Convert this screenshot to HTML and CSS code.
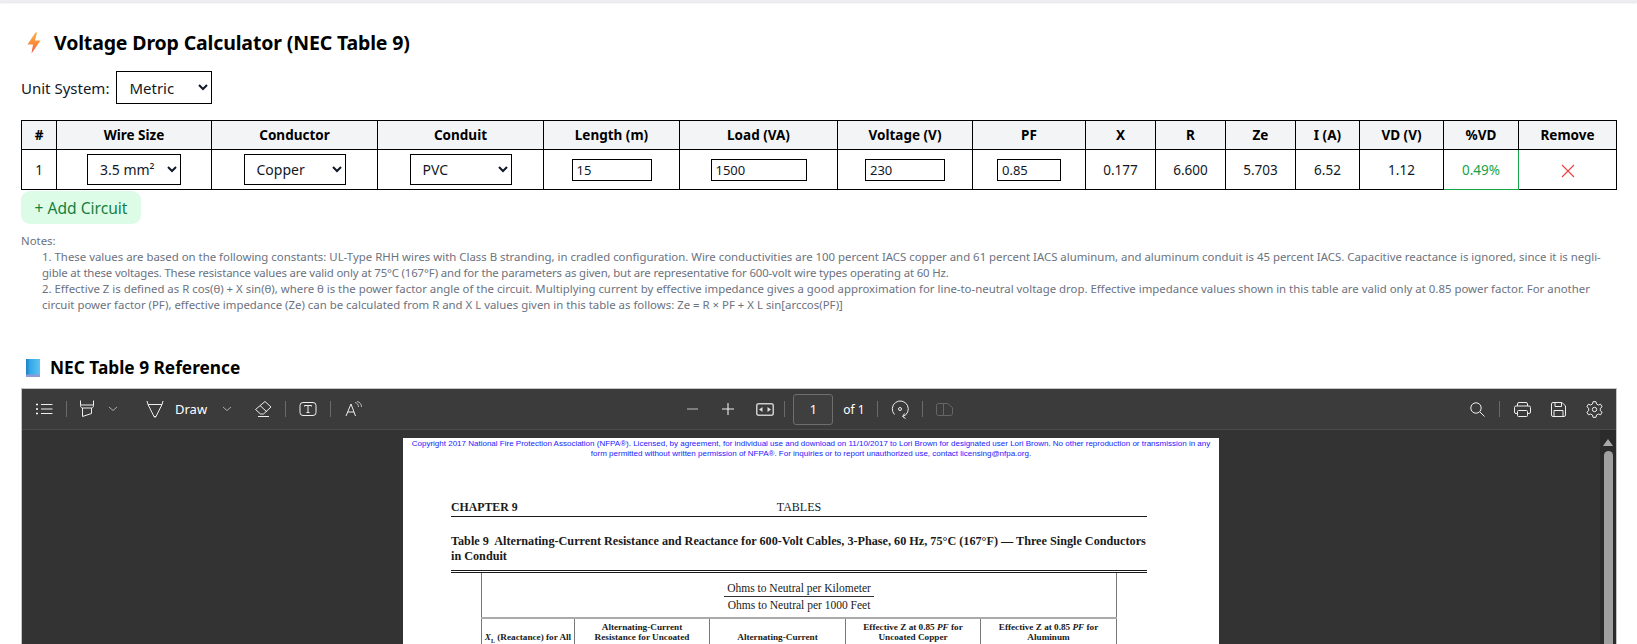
FILE: index.html
```html
<!DOCTYPE html>
<html lang="en">
<head>
  <meta charset="UTF-8">
  <title>Voltage Drop Calculator</title>
  <link rel="stylesheet" href="styles.css">
</head>
<body>
  <div class="topbar"></div>
  <main class="content">
    <!-- Calculator -->
    <h2 class="title">
      <svg class="title-icon" width="16" height="22" viewBox="0 0 16 22">
        <defs><linearGradient id="bolt" x1="0" y1="0" x2="0" y2="1"><stop offset="0" stop-color="#fbb040"/><stop offset="0.55" stop-color="#f98a3c"/><stop offset="1" stop-color="#ec5246"/></linearGradient></defs>
        <path d="M9.5 0.5 L1.5 12.5 H7 L5.5 21.5 L14.5 8.5 H9 L11 0.5 Z" fill="url(#bolt)"/>
      </svg>
      Voltage Drop Calculator (NEC Table 9)
    </h2>

    <div class="unit-row">
      <label for="unit">Unit System:</label>
      <select id="unit" class="unit-select"><option>Metric</option><option>Imperial</option></select>
    </div>

    <table class="circuits">
      <colgroup>
        <col><col><col><col><col><col><col><col><col><col><col><col><col><col><col>
      </colgroup>
      <thead>
        <tr>
          <th>#</th><th>Wire Size</th><th>Conductor</th><th>Conduit</th><th>Length (m)</th><th>Load (VA)</th><th>Voltage (V)</th><th>PF</th>
          <th>X</th><th>R</th><th>Ze</th><th>I (A)</th><th>VD (V)</th><th>%VD</th><th>Remove</th>
        </tr>
      </thead>
      <tbody>
        <tr>
          <td>1</td>
          <td><select class="sel-wire"><option>3.5 mm²</option></select></td>
          <td><select class="sel-wide"><option>Copper</option></select></td>
          <td><select class="sel-wide"><option>PVC</option></select></td>
          <td><input class="in-len" value="15"></td>
          <td><input class="in-load" value="1500"></td>
          <td><input class="in-len" value="230"></td>
          <td><input class="in-pf" value="0.85"></td>
          <td>0.177</td><td>6.600</td><td>5.703</td><td>6.52</td><td>1.12</td>
          <td class="vd-ok">0.49%</td>
          <td class="remove">
            <svg width="14" height="14" viewBox="0 0 14 14"><path d="M1 1 L13 13 M13 1 L1 13" stroke="#ef4444" stroke-width="1.2" fill="none"/></svg>
          </td>
        </tr>
      </tbody>
    </table>

    <button class="add-btn">+ Add Circuit</button>

    <div class="notes">
      <div>Notes:</div>
      <div class="note">1. These values are based on the following constants: UL-Type RHH wires with Class B stranding, in cradled configuration. Wire conductivities are 100 percent IACS copper and 61 percent IACS aluminum, and aluminum conduit is 45 percent IACS. Capacitive reactance is ignored, since it is negli-<br><span class="tight">gible at these voltages. These resistance values are valid only at 75°C (167°F) and for the parameters as given, but are representative for 600-volt wire types operating at 60 Hz.</span></div>
      <div class="note">2. Effective Z is defined as R cos(θ) + X sin(θ), where θ is the power factor angle of the circuit. Multiplying current by effective impedance gives a good approximation for line-to-neutral voltage drop. Effective impedance values shown in this table are valid only at 0.85 power factor. For another<br>circuit power factor (PF), effective impedance (Ze) can be calculated from R and X L values given in this table as follows: Ze = R × PF + X L sin[arccos(PF)]</div>
    </div>

    <!-- Reference PDF -->
    <h3 class="ref-title">
      <svg width="15" height="18" viewBox="0 0 15 18">
        <defs><linearGradient id="book" x1="0" y1="0" x2="1" y2="0"><stop offset="0" stop-color="#1b7fc4"/><stop offset="0.3" stop-color="#35a8e8"/><stop offset="1" stop-color="#5cc4f2"/></linearGradient></defs>
        <rect x="1" y="0" width="14" height="16" fill="url(#book)"/>
        <rect x="1" y="15.5" width="14" height="2.5" fill="#8f9bd6"/>
      </svg>
      NEC Table 9 Reference
    </h3>

    <div class="viewer">
      <div class="toolbar">
        <div class="tb-left">
          <span class="tb-btn w44"><svg width="18" height="14" viewBox="0 0 18 14"><path d="M6 2.5H17.5M6 7H17.5M6 11.5H17.5" stroke="#eee" fill="none"/><path d="M1 2.5H3M1 7H3M1 11.5H3" stroke="#fff" stroke-width="1.6" fill="none"/></svg></span>
          <span class="tb-sep"></span>
          <span class="tb-btn w40"><svg width="16" height="18" viewBox="0 0 16 18"><path d="M1.5 0.5V5.5C1.5 7 2 7.5 3.5 8V16.5L12.5 13.5V8C14 7.5 14.5 7 14.5 5.5V0.5M1.5 5H14.5M3.5 8H12.5" stroke="#eee" fill="none"/></svg></span>
          <span class="tb-chev"><svg width="10" height="6" viewBox="0 0 10 6"><path d="M1 1L5 4.5L9 1" stroke="#aaa" fill="none"/></svg></span>
          <span class="tb-btn w24 ml24"><svg width="18" height="18" viewBox="0 0 18 18"><path d="M1 1L2 4.5L8 16.5H10L16 4.5L17 1M2 4.5H16M8 16.5L9 17.5L10 16.5" stroke="#eee" fill="none"/></svg></span>
          <span class="tb-label">Draw</span>
          <span class="tb-chev ml14"><svg width="10" height="6" viewBox="0 0 10 6"><path d="M1 1L5 4.5L9 1" stroke="#aaa" fill="none"/></svg></span>
          <span class="tb-btn w44 ml8"><svg width="18" height="18" viewBox="0 0 18 18"><path d="M11 1.5L17 7L9.5 14H6.5L1.5 9.5ZM6 5.5L13 12M4 16.5H15" stroke="#eee" fill="none"/></svg></span>
          <span class="tb-sep"></span>
          <span class="tb-btn w44"><svg width="18" height="16" viewBox="0 0 18 16"><rect x="1" y="1.5" width="16" height="13" rx="3" stroke="#eee" fill="none"/><path d="M5.5 5.5V4.5H12.5V5.5M9 4.5V11.5M7.5 11.5H10.5" stroke="#eee" fill="none"/></svg></span>
          <span class="tb-sep"></span>
          <span class="tb-btn w44"><svg width="17" height="16" viewBox="0 0 17 16"><path d="M1 15L6 3L10.5 15M2.8 11H9" stroke="#eee" fill="none"/><path d="M10 1.5C12.5 2 13.5 4 13.5 6M12 0.5C15 1 16.5 3.5 16.5 6" stroke="#bbb" fill="none"/></svg></span>
        </div>

        <div class="tb-center">
          <span class="tb-btn w36"><svg width="11" height="2" viewBox="0 0 11 2"><path d="M0 1H11" stroke="#aaa" stroke-width="1.2"/></svg></span>
          <span class="tb-btn w36"><svg width="12" height="12" viewBox="0 0 12 12"><path d="M0 6H12M6 0V12" stroke="#eee" stroke-width="1.1"/></svg></span>
          <span class="tb-btn w38"><svg width="18" height="13" viewBox="0 0 18 13"><rect x="0.75" y="0.75" width="16.5" height="11.5" rx="2" stroke="#ccc" stroke-width="1.5" fill="none"/><path d="M3 6.5L6.5 4V9ZM15 6.5L11.5 4V9Z" fill="#ddd"/></svg></span>
          <span class="tb-sep"></span>
          <span class="page-box">1</span>
          <span class="page-of">of 1</span>
          <span class="tb-sep ml12"></span>
          <span class="tb-btn w44"><svg width="18" height="19" viewBox="0 0 18 19"><path d="M3.5 14.5A8 8 0 1 1 12 16.5" stroke="#eee" fill="none"/><path d="M13.5 13.5L11.5 16.5L14.5 18.5" stroke="#eee" fill="none"/><circle cx="9" cy="9" r="1.5" stroke="#eee" fill="none"/></svg></span>
          <span class="tb-sep"></span>
          <span class="tb-btn w44"><svg width="17" height="13" viewBox="0 0 17 13"><path d="M7.5 0.5H2.5A2 2 0 0 0 0.5 2.5V10.5A2 2 0 0 0 2.5 12.5H7.5ZM7.5 0.5H11.5L16.5 4.5V10.5A2 2 0 0 1 14.5 12.5H7.5" stroke="#666" fill="none"/></svg></span>
        </div>

        <div class="tb-right">
          <span class="tb-btn w44"><svg width="15" height="15" viewBox="0 0 15 15"><circle cx="6" cy="6" r="5.2" stroke="#eee" fill="none"/><path d="M9.8 9.8L14.5 14.5" stroke="#eee" fill="none"/></svg></span>
          <span class="tb-sep mr4"></span>
          <span class="tb-btn w36"><svg width="17" height="15" viewBox="0 0 17 15"><path d="M3.5 4V2A1.5 1.5 0 0 1 5 0.5H12A1.5 1.5 0 0 1 13.5 2V4M3.5 11.5H2A1.5 1.5 0 0 1 0.5 10V5.5A1.5 1.5 0 0 1 2 4H15A1.5 1.5 0 0 1 16.5 5.5V10A1.5 1.5 0 0 1 15 11.5H13.5" stroke="#eee" fill="none"/><rect x="3.5" y="8.5" width="10" height="6" rx="1" stroke="#eee" fill="none"/></svg></span>
          <span class="tb-btn w36"><svg width="15" height="15" viewBox="0 0 15 15"><path d="M2 0.5H11L14.5 4V13A1.5 1.5 0 0 1 13 14.5H2A1.5 1.5 0 0 1 0.5 13V2A1.5 1.5 0 0 1 2 0.5ZM4 0.5V4.5H10.5V0.5M3 14.5V8.5H12V14.5" stroke="#eee" fill="none"/></svg></span>
          <span class="tb-btn w36"><svg width="17" height="17" viewBox="0 0 17 17"><path d="M7 0.7H10L10.5 3L12.4 4L14.6 3.2L16.1 5.8L14.3 7.3V9.7L16.1 11.2L14.6 13.8L12.4 13L10.5 14L10 16.3H7L6.5 14L4.6 13L2.4 13.8L0.9 11.2L2.7 9.7V7.3L0.9 5.8L2.4 3.2L4.6 4L6.5 3Z" stroke="#eee" stroke-linejoin="round" fill="none"/><circle cx="8.5" cy="8.5" r="2.2" stroke="#eee" fill="none"/></svg></span>
        </div>
      </div>

      <div class="viewer-body">
        <div class="stage">
          <div class="pdf-page">
            <p class="copyright">Copyright 2017 National Fire Protection Association (NFPA®). Licensed, by agreement, for individual use and download on 11/10/2017 to Lori Brown for designated user Lori Brown. No other reproduction or transmission in any form permitted without written permission of NFPA®. For inquiries or to report unauthorized use, contact licensing@nfpa.org.</p>
            <div class="chapter"><b>CHAPTER 9</b><span class="chapter-name">TABLES</span></div>
            <div class="table-head">Table 9&nbsp; Alternating-Current Resistance and Reactance for 600-Volt Cables, 3-Phase, 60 Hz, 75°C (167°F) — Three Single Conductors in Conduit</div>
            <table class="nec">
              <colgroup><col><col><col><col><col></colgroup>
              <tr><td colspan="5" class="nec-units"><span class="km">Ohms to Neutral per Kilometer</span><span>Ohms to Neutral per 1000 Feet</span></td></tr>
              <tr class="nec-head">
                <th class="low"><i>X</i><sub>L</sub> (Reactance) for All<br>Wires</th>
                <th>Alternating-Current<br>Resistance for Uncoated<br>Copper Wires</th>
                <th class="low">Alternating-Current<br>Resistance for Aluminum Wires</th>
                <th>Effective Z at 0.85 <i>PF</i> for<br>Uncoated Copper<br>Wires</th>
                <th>Effective Z at 0.85 <i>PF</i> for<br>Aluminum<br>Wires</th>
              </tr>
            </table>
          </div>
        </div>
        <div class="scrollbar">
          <span class="scroll-up"></span>
          <span class="scroll-thumb"></span>
        </div>
      </div>
    </div>
  </main>
</body>
</html>
```
FILE: styles.css
```css
* {
  margin: 0;
  padding: 0;
  box-sizing: border-box;
}

html, body {
  height: 644px;
  overflow: hidden;
  background: #fff;
}

body {
  font-family: "Noto Sans", "Open Sans", sans-serif;
  color: #111827;
}

/* Shadow of the header above the page */
.topbar {
  height: 2px;
  background: #eceef1;
  box-shadow: 0 1px 2px rgba(0, 0, 0, 0.12);
}

.content {
  padding: 28px 20px 0 21px;
}

.title {
  display: flex;
  align-items: center;
  font-size: 19.5px;
  font-weight: 700;
  line-height: 26px;
  color: #000;
  letter-spacing: -0.15px;
}

.title-icon {
  margin: 0 12px 0 5px;
}

.unit-row {
  display: flex;
  align-items: center;
  gap: 7px;
  margin-top: 15px;
  font-size: 15px;
}

select, input {
  font-family: inherit;
  color: #111827;
  background: #fff;
  border: 1px solid #000;
  border-radius: 0;
  font-size: 14px;
  outline: none;
}

.unit-select {
  width: 96px;
  height: 33px;
  padding-left: 8px;
  font-size: 15px;
}

/* Circuit table */
.circuits {
  width: 1596px;
  margin-top: 16px;
  border-collapse: collapse;
  table-layout: fixed;
  font-size: 13.5px;
}

.circuits col:nth-child(1) { width: 35px; }
.circuits col:nth-child(2) { width: 155px; }
.circuits col:nth-child(3) { width: 166px; }
.circuits col:nth-child(4) { width: 166px; }
.circuits col:nth-child(5) { width: 136px; }
.circuits col:nth-child(6) { width: 158px; }
.circuits col:nth-child(7) { width: 135px; }
.circuits col:nth-child(8) { width: 113px; }
.circuits col:nth-child(9) { width: 70px; }
.circuits col:nth-child(10) { width: 70px; }
.circuits col:nth-child(11) { width: 70px; }
.circuits col:nth-child(12) { width: 64px; }
.circuits col:nth-child(13) { width: 84px; }
.circuits col:nth-child(14) { width: 75px; }
.circuits col:nth-child(15) { width: 98px; }

.circuits th, .circuits td {
  border: 1px solid #000;
  text-align: center;
}

.circuits th {
  height: 29px;
  background: #f3f4f6;
  font-size: 13.5px;
  font-weight: 700;
  color: #000;
}

.circuits td {
  height: 40px;
}

.circuits select {
  height: 31px;
  padding-left: 8px;
  vertical-align: middle;
}

.sel-wire { width: 94px; }
.sel-wide { width: 102px; }

.circuits input {
  height: 22px;
  padding: 0 4px;
  font-size: 13px;
  vertical-align: middle;
}

.in-len { width: 80px; }
.in-load { width: 96px; }
.in-pf { width: 64px; }

.circuits td.vd-ok {
  border-color: #16a34a;
  color: #16a34a;
}

.remove svg {
  vertical-align: middle;
}

.add-btn {
  display: block;
  width: 120px;
  height: 33px;
  margin-top: 1px;
  border: none;
  border-radius: 9px;
  background: #dcfce7;
  color: #15803d;
  font-family: inherit;
  font-size: 15.6px;
}

.notes {
  margin-top: 9px;
  font-size: 11.4px;
  line-height: 16px;
  color: #6b7280;
  white-space: nowrap;
}

.note {
  padding-left: 21px;
}

.tight {
  letter-spacing: -0.15px;
}

.ref-title {
  display: flex;
  align-items: center;
  gap: 10px;
  margin-top: 43px;
  padding-left: 4px;
  font-size: 17.3px;
  font-weight: 700;
  line-height: 24px;
  color: #000;
}

/* PDF viewer */
.viewer {
  margin-top: 8px;
  width: 1596px;
  height: 400px;
  border: 1px solid #c4c4c4;
  border-bottom: none;
  background: #333;
  overflow: hidden;
}

.toolbar {
  display: grid;
  grid-template-columns: 1fr auto 1fr;
  height: 41px;
  background: #3b3b3b;
  border-bottom: 1px solid #4a4a4a;
  color: #fff;
}

.tb-left, .tb-center, .tb-right {
  display: flex;
  align-items: center;
}

.tb-center { padding-left: 3px; }
.tb-right {
  justify-content: flex-end;
  padding-right: 4px;
}

.tb-btn {
  display: flex;
  align-items: center;
  justify-content: center;
  height: 24px;
  flex: none;
}

.w24 { width: 24px; }
.w36 { width: 36px; }
.w38 { width: 38px; }
.w40 { width: 40px; }
.w44 { width: 44px; }
.ml8 { margin-left: 8px; }
.ml12 { margin-left: 12px; }
.ml14 { margin-left: 14px; }
.ml24 { margin-left: 24px; }
.mr4 { margin-right: 4px; }

.tb-sep {
  width: 1px;
  height: 16px;
  background: #6a6a6a;
  flex: none;
}

.tb-chev {
  display: flex;
  justify-content: center;
  width: 12px;
  flex: none;
}

.tb-label {
  margin-left: 8px;
  font-size: 13px;
}

.page-box {
  width: 40px;
  height: 31px;
  margin-left: 8px;
  border: 1px solid #6e6e6e;
  border-radius: 3px;
  background: #3f3f3f;
  font-size: 12.5px;
  line-height: 29px;
  text-align: center;
}

.page-of {
  margin-left: 10px;
  font-size: 12px;
}

.viewer-body {
  display: flex;
  height: 358px;
}

.stage {
  flex: 1;
  display: flex;
  justify-content: center;
  padding-top: 8px;
  overflow: hidden;
}

.pdf-page {
  flex: none;
  width: 816px;
  height: 1056px;
  padding: 0 72px 0 48px;
  background: #fff;
  color: #1a1a1a;
  font-family: "Liberation Serif", serif;
}

.copyright {
  margin: 1px -68px 0 -44px;
  font-family: "Liberation Sans", sans-serif;
  font-size: 8px;
  line-height: 10px;
  text-align: center;
  color: #1a1aff;
}

.chapter {
  display: grid;
  grid-template-columns: 1fr auto 1fr;
  margin-top: 41px;
  padding-bottom: 2px;
  border-bottom: 1.5px solid #1a1a1a;
  font-size: 11.8px;
  line-height: 14px;
}

.chapter-name {
  grid-column: 2;
  font-size: 12px;
}

.table-head {
  margin-top: 17px;
  padding-bottom: 7px;
  border-bottom: 3px double #1a1a1a;
  font-size: 12.2px;
  font-weight: 700;
  line-height: 14.5px;
}

.nec {
  width: 635px;
  margin-left: 30px;
  border-collapse: collapse;
  table-layout: fixed;
  border-left: 1px solid #777;
  border-right: 1px solid #777;
}

.nec col:nth-child(1) { width: 93px; }
.nec col:nth-child(2) { width: 135px; }
.nec col:nth-child(3) { width: 136px; }
.nec col:nth-child(4) { width: 135px; }
.nec col:nth-child(5) { width: 136px; }

.nec-units {
  height: 45px;
  padding-top: 3px;
  border-bottom: 2px solid #aaa;
  text-align: center;
  font-size: 11.5px;
  line-height: 15px;
}

.nec-units span {
  display: block;
  width: 150px;
  margin: 0 auto;
}

.km {
  border-bottom: 1px solid #333;
  margin-bottom: 1px !important;
}

.nec-head th {
  padding: 3px 2px 0;
  border-left: 1px solid #777;
  font-size: 9.2px;
  line-height: 10px;
  vertical-align: top;
}

.nec-head th.low {
  padding-top: 13px;
}

.nec-head sub {
  font-size: 6px;
  line-height: 0;
}

.scrollbar {
  display: flex;
  flex-direction: column;
  align-items: center;
  width: 16px;
  padding-top: 9px;
  background: #2b2b2b;
}

.scroll-up {
  width: 0;
  height: 0;
  border-left: 5px solid transparent;
  border-right: 5px solid transparent;
  border-bottom: 7px solid #a8a8a8;
}

.scroll-thumb {
  width: 9px;
  flex: 1;
  margin-top: 5px;
  border-radius: 5px 5px 0 0;
  background: #a0a0a0;
}
```
